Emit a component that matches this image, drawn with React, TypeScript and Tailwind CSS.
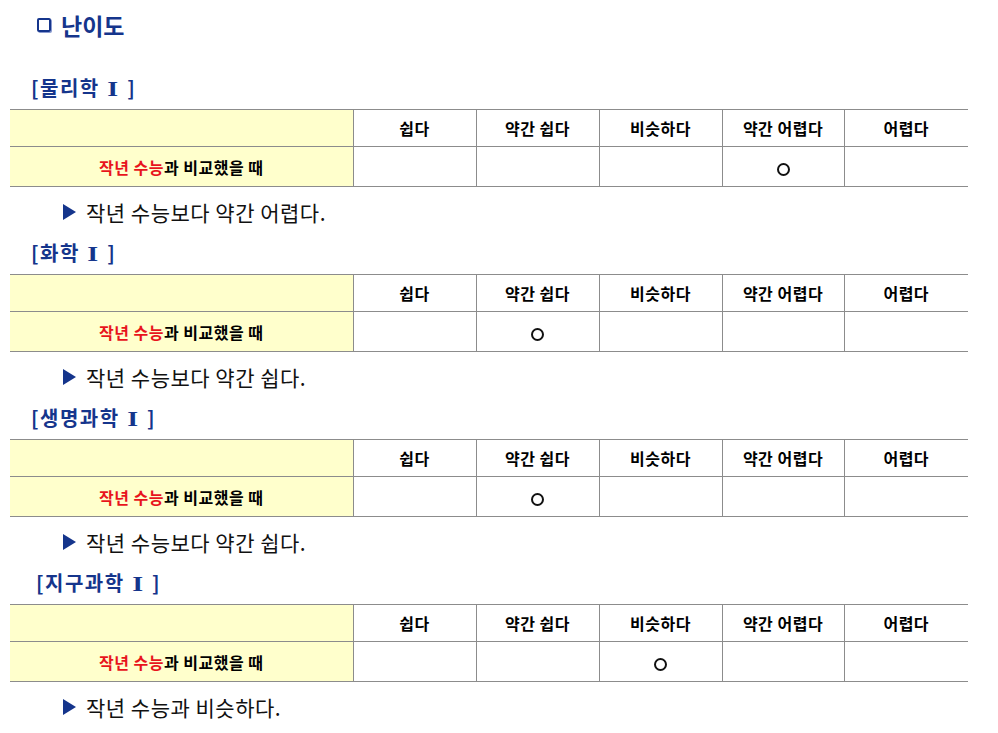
import React from 'react';

const levels = ['쉽다', '약간 쉽다', '비슷하다', '약간 어렵다', '어렵다'];

const subjects = [
    { name: '물리학', pick: 3, note: '작년 수능보다 약간 어렵다.', shift: false },
    { name: '화학', pick: 1, note: '작년 수능보다 약간 쉽다.', shift: false },
    { name: '생명과학', pick: 1, note: '작년 수능보다 약간 쉽다.', shift: false },
    { name: '지구과학', pick: 2, note: '작년 수능과 비슷하다.', shift: true },
];

const font = { fontFamily: '"Noto Sans CJK KR", "Noto Sans", sans-serif' };

const Section = ({ s }: { s: (typeof subjects)[number] }) => (
    <div className="mb-[14px]">
        <h2 className={`h-[26px] leading-[26px] text-[20px] font-bold text-[#15358c] mb-[8px] tracking-[1.5px] ${s.shift ? 'pl-[36px]' : 'pl-[31px]'}`}>
            [{s.name} <span className="inline-block mx-[3px] scale-x-[1.4] font-['Liberation_Serif',serif] font-bold text-[20px]">I</span> ]
        </h2>
        <table className="ml-[10px] w-[958px] border-collapse table-fixed">
            <colgroup>
                <col className="w-[343px]" />
                <col className="w-[123px]" />
                <col className="w-[123px]" />
                <col className="w-[123px]" />
                <col className="w-[122px]" />
                <col className="w-[124px]" />
            </colgroup>
            <tbody>
                <tr className="h-[37px] border-t border-b border-[#8c8c8c]">
                    <td className="bg-[#ffffcc] border-r border-[#8c8c8c]" />
                    {levels.map((l, i) => (
                        <td key={i} className={`text-center text-[16px] tracking-[0.5px] font-bold text-black ${i < 4 ? 'border-r border-[#8c8c8c]' : ''}`}>{l}</td>
                    ))}
                </tr>
                <tr className="h-[40px] border-b border-[#8c8c8c]">
                    <td className="bg-[#ffffcc] border-r border-[#8c8c8c] text-center text-[16px] tracking-[0.5px] font-bold">
                        <span className="text-[#e8141c]">작년 수능</span><span className="text-black">과 비교했을 때</span>
                    </td>
                    {levels.map((_, i) => (
                        <td key={i} className={`text-center ${i < 4 ? 'border-r border-[#8c8c8c]' : ''}`}>
                            {i === s.pick && <span className="inline-block align-middle w-[13px] h-[13px] rounded-full border-2 border-[#111]" />}
                        </td>
                    ))}
                </tr>
            </tbody>
        </table>
        <p className="mt-[11px] h-[28px] leading-[28px] pl-[63px] flex items-center text-[21px] tracking-[0.5px] text-[#111]">
            <svg width="13" height="16" viewBox="0 0 13 16" className="mr-[10px]">
                <path d="M0 0 L13 8 L0 16 Z" fill="#15358c" />
            </svg>
            {s.note}
        </p>
    </div>
);

export default function App() {
    return (
        <div className="w-[998px] h-[733px] bg-white overflow-hidden pt-[10px]" style={font}>
            <h1 className="h-[30px] leading-[30px] pl-[37px] text-[23px] font-bold text-[#15358c] mb-[35px] flex items-center">
                <span className="inline-block w-[14px] h-[14px] border-[2.5px] border-[#15358c] rounded-[2px] mr-[10px] shadow-[1px_1px_0_#8a9ad0]" />
                난이도
            </h1>
            {subjects.map((s, i) => <Section key={i} s={s} />)}
        </div>
    );
}
